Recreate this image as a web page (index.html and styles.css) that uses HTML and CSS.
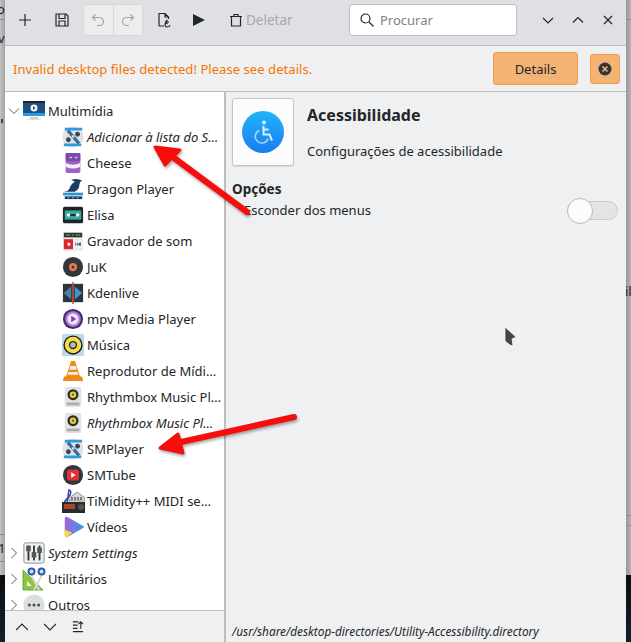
FILE: index.html

```html
<!DOCTYPE html>
<html lang="en">
<head>
  <meta charset="UTF-8" />
  <meta name="viewport" content="width=device-width, initial-scale=1.0" />
  <title>Editor de menus</title>
  <link rel="stylesheet" href="styles.css">
</head>
<body>
  <svg class="defs" width="0" height="0">
    <symbol id="smplayer" viewBox="0 0 24 24">
      <circle cx="12" cy="12" r="11.500" fill="#dfe3e6"/>
      <path d="M3 2h19v3H3zM2 19h19v3H2z" fill="#2f9ae0"/>
      <path d="M5 6l3-2 12 14-3 2z" fill="#3a6f9c"/>
      <circle cx="17" cy="9" r="2.600" fill="#3b4247"/>
      <circle cx="7" cy="15" r="2.600" fill="#3b4247"/>
      <circle cx="12" cy="11.500" r="1.300" fill="#f3f5f6"/>
    </symbol>
    <symbol id="rhythmbox" viewBox="0 0 24 24">
      <rect x="3" y="1" width="18" height="22" rx="2" fill="#e2e2e2"/>
      <rect x="5" y="18" width="14" height="3" fill="#adadad"/>
      <circle cx="12" cy="9.500" r="6" fill="#2b2b2b"/>
      <circle cx="12" cy="9.500" r="3.500" fill="#e5cf3a"/>
      <circle cx="12" cy="9.500" r="1.200" fill="#555"/>
    </symbol>
  </svg>

  <div class="desktop">
    <div class="strip strip-left">
      <div class="back-area back-left">
        <span class="back-text back-o">o</span>
        <div class="back-line line-l1"></div>
        <span class="back-text back-v">v(</span>
        <div class="back-mark"></div>
        <div class="back-line line-l2"></div>
        <span class="back-text back-one">1</span>
        <div class="back-line line-l3"></div>
      </div>
      <div class="back-dark"></div>
    </div>

    <div class="window">
      <div class="toolbar">
        <button class="tool tool-first">
          <svg width="16" height="16" viewBox="0 0 16 16"><path d="M8 2v12M2 8h12" class="ico"/></svg>
        </button>
        <button class="tool">
          <svg width="16" height="16" viewBox="0 0 16 16"><path d="M2 2h10l2 2v10H2zM5 2v4.500h6V2M5 14V9h6v5" class="ico"/></svg>
        </button>
        <div class="tool-group">
          <button class="tool-small">
            <svg width="14" height="14" viewBox="0 0 14 14"><path d="M4.500 1.500L1.500 4.500l3 3M1.500 4.500h7a3.500 3.500 0 0 1 0 8H6" class="ico-off"/></svg>
          </button>
          <button class="tool-small">
            <svg width="14" height="14" viewBox="0 0 14 14"><path d="M9.500 1.500l3 3-3 3M12.500 4.500h-7a3.500 3.500 0 0 0 0 8H8" class="ico-off"/></svg>
          </button>
        </div>
        <button class="tool">
          <svg width="16" height="16" viewBox="0 0 16 16"><path d="M3 14V1.500h6l3.500 3.500v2M9 1.500V5h3.500M8 14H3M14 13a2.500 2.500 0 1 1-2.500-3H13M11.500 8l-2 2 2 2" class="ico"/></svg>
        </button>
        <button class="tool tool-play">
          <svg width="14" height="14" viewBox="0 0 14 14"><path d="M1 1l12 6-12 6z" fill="#232629"/></svg>
        </button>
        <button class="tool-delete">
          <svg width="14" height="14" viewBox="0 0 14 14"><path d="M1 3.500h12M5 3.500V1.500h4v2M2.500 3.500v9.500h9V3.500" class="ico"/></svg>
          <span>Deletar</span>
        </button>
        <div class="search">
          <svg width="14" height="14" viewBox="0 0 14 14"><circle cx="5.500" cy="5.500" r="4.500" class="ico"/><path d="M9 9l4.500 4.500" class="ico"/></svg>
          <span>Procurar</span>
        </div>
        <button class="win-btn">
          <svg width="12" height="12" viewBox="0 0 12 12"><path d="M1 4l5 5 5-5" class="ico"/></svg>
        </button>
        <button class="win-btn">
          <svg width="12" height="12" viewBox="0 0 12 12"><path d="M1 8.500l5-5 5 5" class="ico"/></svg>
        </button>
        <button class="win-btn">
          <svg width="12" height="12" viewBox="0 0 12 12"><path d="M2 2l8 8M10 2l-8 8" class="ico"/></svg>
        </button>
      </div>

      <div class="message">
        <span class="message-text">Invalid desktop files detected! Please see details.</span>
        <button class="details">Details</button>
        <button class="dismiss">
          <svg width="14" height="14" viewBox="0 0 14 14"><circle cx="7" cy="7" r="6.500" fill="#31363b"/><path d="M4.500 4.500l5 5M9.500 4.500l-5 5" stroke="#f3b375" stroke-width="1.600"/></svg>
        </button>
      </div>

      <div class="main">
        <div class="side">
          <ul class="tree">
            <li class="row">
              <svg class="arrow" width="12" height="12" viewBox="0 0 12 12"><path d="M1 3.500l5 5 5-5" class="ico-soft"/></svg>
              <svg class="cat-icon" width="24" height="24" viewBox="0 0 24 24">
                <rect x="1" y="3" width="22" height="14" fill="#1d4f80"/>
                <rect x="1" y="14" width="22" height="3" fill="#2a9be0"/>
                <rect x="1" y="2" width="22" height="2" fill="#222"/>
                <circle cx="12" cy="9" r="3.500" fill="#eef3f7"/>
                <path d="M11 7.300l2.600 1.700-2.600 1.700z" fill="#1d4f80"/>
                <rect x="8" y="18" width="8" height="2" fill="#c7cdd2"/>
                <rect x="5" y="20" width="14" height="1" fill="#dfe3e6"/>
              </svg>
              <span>Multimídia</span>
            </li>
            <li class="row child">
              <svg class="app-icon" width="22" height="22"><use href="#smplayer"/></svg>
              <span class="hidden-item">Adicionar à lista do S…</span>
            </li>
            <li class="row child">
              <svg class="app-icon" width="22" height="22" viewBox="0 0 24 24">
                <rect x="4" y="1" width="16" height="22" rx="2" fill="#9a62c4"/>
                <rect x="4" y="1" width="16" height="9" rx="1" fill="#7d4aa8"/>
                <path d="M4 12q8 4 16 0v4q-8 4-16 0z" fill="#f5eefa"/>
                <path d="M8 6h3M14 6h3" stroke="#d7b8ea" stroke-width="1.500"/>
              </svg>
              <span>Cheese</span>
            </li>
            <li class="row child">
              <svg class="app-icon" width="22" height="22" viewBox="0 0 24 24">
                <path d="M2 15q4 0 6-3 1-5 6-8l-4-2q7-2 12 1-3 1-3 4 0 5-5 8H2z" fill="#1a3d66"/>
                <path d="M1 16h22v3H1z" fill="#2b95d8"/>
                <path d="M3 20h19v3H3z" fill="#1a3d66"/>
                <path d="M6 21.500h2M11 21.500h2M16 21.500h2" stroke="#8cc7ec"/>
              </svg>
              <span>Dragon Player</span>
            </li>
            <li class="row child">
              <svg class="app-icon" width="22" height="22" viewBox="0 0 24 24">
                <rect x="1" y="3" width="22" height="18" rx="2" fill="#202426"/>
                <rect x="3" y="7" width="18" height="10" fill="#3aa89a"/>
                <circle cx="7" cy="12" r="2" fill="#e8f4f2"/>
                <circle cx="17" cy="12" r="2" fill="#e8f4f2"/>
                <path d="M9 12h6" stroke="#202426" stroke-width="2"/>
              </svg>
              <span>Elisa</span>
            </li>
            <li class="row child">
              <svg class="app-icon" width="22" height="22" viewBox="0 0 24 24">
                <rect x="1" y="2" width="22" height="21" fill="#eceeef"/>
                <rect x="2" y="3" width="20" height="5" fill="#2e3336"/>
                <path d="M4 5.500h5M11 5.500h2M15 5.500h5" stroke="#6fd060"/>
                <rect x="2" y="10" width="10" height="11" fill="#e0252f"/>
                <rect x="6" y="14" width="3" height="3" fill="#fff"/>
                <path d="M15 14v3M17 14v3M20 14l-2 1.500 2 1.500z" stroke="#555"/>
              </svg>
              <span>Gravador de som</span>
            </li>
            <li class="row child">
              <svg class="app-icon" width="22" height="22" viewBox="0 0 24 24">
                <circle cx="12" cy="12" r="11" fill="#33363a"/>
                <circle cx="12" cy="12" r="4.500" fill="#e8774a"/>
                <circle cx="12" cy="12" r="1.500" fill="#33363a"/>
              </svg>
              <span>JuK</span>
            </li>
            <li class="row child">
              <svg class="app-icon" width="22" height="22" viewBox="0 0 24 24">
                <rect x="1" y="2" width="22" height="20" fill="#2f3438"/>
                <path d="M10 5v14l-8-7z" fill="#4a7fa6"/>
                <path d="M14 5v14l8-7z" fill="#3f95cf"/>
                <rect x="11.200" y="0" width="1.600" height="24" fill="#c9503f"/>
              </svg>
              <span>Kdenlive</span>
            </li>
            <li class="row child">
              <svg class="app-icon" width="22" height="22" viewBox="0 0 24 24">
                <circle cx="12" cy="12" r="11" fill="#4a2a72"/>
                <circle cx="12" cy="12" r="8.500" fill="#b07fd8"/>
                <circle cx="12" cy="12" r="6" fill="#efe6f7"/>
                <path d="M10 8.500l5.500 3.500-5.500 3.500z" fill="#7b3fb0"/>
              </svg>
              <span>mpv Media Player</span>
            </li>
            <li class="row child">
              <svg class="app-icon" width="22" height="22" viewBox="0 0 24 24">
                <rect x="0" y="0" width="24" height="24" rx="2" fill="#bcd9ec"/>
                <circle cx="12" cy="12" r="10.500" fill="#1d1d1d"/>
                <circle cx="12" cy="12" r="9" fill="#f1dd45"/>
                <circle cx="12" cy="12" r="4.500" fill="#2a2a2a"/>
                <circle cx="12" cy="12" r="3" fill="#b9b9b9"/>
              </svg>
              <span>Música</span>
            </li>
            <li class="row child">
              <svg class="app-icon" width="22" height="22" viewBox="0 0 24 24">
                <path d="M10 1h4l6 18H4z" fill="#f28a14"/>
                <path d="M9 6.500h6l1 4H8zM7 13h10l1 3H6z" fill="#f4f0e8"/>
                <path d="M2 18h20l1 5H1z" fill="#ef8a12"/>
              </svg>
              <span>Reprodutor de Mídi…</span>
            </li>
            <li class="row child">
              <svg class="app-icon" width="22" height="22"><use href="#rhythmbox"/></svg>
              <span>Rhythmbox Music Pl…</span>
            </li>
            <li class="row child">
              <svg class="app-icon" width="22" height="22"><use href="#rhythmbox"/></svg>
              <span class="hidden-item">Rhythmbox Music Pl…</span>
            </li>
            <li class="row child">
              <svg class="app-icon" width="22" height="22"><use href="#smplayer"/></svg>
              <span>SMPlayer</span>
            </li>
            <li class="row child">
              <svg class="app-icon" width="22" height="22" viewBox="0 0 24 24">
                <circle cx="12" cy="12" r="11" fill="#33363a"/>
                <rect x="5.500" y="6" width="13" height="12" rx="2.500" fill="#e2303a"/>
                <path d="M10 9l5 3-5 3z" fill="#fff"/>
              </svg>
              <span>SMTube</span>
            </li>
            <li class="row child timidity">
              <svg class="app-icon" width="24" height="24" viewBox="0 0 24 24">
                <path d="M6 14L8 1q3 1 1 5L4 12q-2 3 1 3" fill="none" stroke="#3b43a8" stroke-width="1.500"/>
                <path d="M8 9l8-6 8 6v3H8z" fill="#d8d8d8" stroke="#555" stroke-width=".6"/>
                <path d="M11 8v3M14 8v3M17 8v3M20 8v3" stroke="#222"/>
                <rect x="1" y="13" width="23" height="11" fill="#2b2b2b"/>
                <rect x="3" y="15" width="11" height="5" fill="#a8472c"/>
                <circle cx="20" cy="18" r="3" fill="#555"/>
              </svg>
              <span>TiMidity++ MIDI se…</span>
            </li>
            <li class="row child">
              <svg class="app-icon" width="22" height="22" viewBox="0 0 24 24">
                <defs>
                  <linearGradient id="vids" x1="0" y1="0" x2="1" y2="0">
                    <stop offset="0" stop-color="#a864d8"/>
                    <stop offset="1" stop-color="#2f9be8"/>
                  </linearGradient>
                </defs>
                <path d="M3 3q0-3 3-2l17 10q2 1 0 2L6 23q-3 1-3-2z" fill="url(#vids)"/>
                <path d="M3 15l8 3-5 5q-3 1-3-2z" fill="#f3d84a"/>
              </svg>
              <span>Vídeos</span>
            </li>
            <li class="row">
              <svg class="arrow" width="12" height="12" viewBox="0 0 12 12"><path d="M3.500 1l5 5-5 5" class="ico-soft"/></svg>
              <svg class="cat-icon" width="24" height="24" viewBox="-1 -1 26 26">
                <rect x="1" y="1" width="22" height="22" rx="2" fill="#eceeef" stroke="#8c8f92"/>
                <rect x="5" y="4" width="2" height="16" fill="#33373a"/>
                <rect x="11" y="4" width="2" height="16" fill="#33373a"/>
                <rect x="17" y="4" width="2" height="16" fill="#33373a"/>
                <rect x="3.500" y="4" width="5" height="6" fill="#55595c"/>
                <rect x="9.500" y="11" width="5" height="6" fill="#55595c"/>
                <rect x="15.500" y="6" width="5" height="6" fill="#55595c"/>
              </svg>
              <span class="hidden-item">System Settings</span>
            </li>
            <li class="row">
              <svg class="arrow" width="12" height="12" viewBox="0 0 12 12"><path d="M3.500 1l5 5-5 5" class="ico-soft"/></svg>
              <svg class="cat-icon" width="24" height="24" viewBox="0 0 24 24">
                <path d="M1 3l20 20H1z" fill="#8cc63f" stroke="#5c9a24" stroke-width=".8"/>
                <path d="M5 14l5 5H5z" fill="#eef6df"/>
                <path d="M9 8l8 15M20 8l-8 15" stroke="#d5d8da" stroke-width="1.800"/>
                <circle cx="9.500" cy="4.500" r="3" fill="#cfe0f2" stroke="#2d5ea8" stroke-width="2"/>
                <circle cx="19.500" cy="4.500" r="3" fill="#cfe0f2" stroke="#2d5ea8" stroke-width="2"/>
              </svg>
              <span>Utilitários</span>
            </li>
            <li class="row">
              <svg class="arrow" width="12" height="12" viewBox="0 0 12 12"><path d="M3.500 1l5 5-5 5" class="ico-soft"/></svg>
              <svg class="cat-icon" width="24" height="24" viewBox="-1 -1 26 26">
                <circle cx="12" cy="12" r="11.500" fill="#dcdfe2"/>
                <circle cx="7" cy="12" r="1.700" fill="#4d5357"/>
                <circle cx="12" cy="12" r="1.700" fill="#4d5357"/>
                <circle cx="17" cy="12" r="1.700" fill="#4d5357"/>
              </svg>
              <span>Outros</span>
            </li>
          </ul>
          <div class="side-actions">
            <button class="side-btn">
              <svg width="12" height="12" viewBox="0 0 12 12"><path d="M0 9l6-6 6 6" class="ico"/></svg>
            </button>
            <button class="side-btn">
              <svg width="12" height="12" viewBox="0 0 12 12"><path d="M0 3l6 6 6-6" class="ico"/></svg>
            </button>
            <button class="side-btn">
              <svg width="13" height="13" viewBox="0 0 13 13"><path d="M1 1.500h6M1 5h5M1 8.500h5M1 12h11M9.500 9V1.500M7 4l2.500-2.500L12 4" class="ico"/></svg>
            </button>
          </div>
        </div>

        <div class="detail">
          <div class="detail-head">
            <button class="icon-btn">
              <svg width="42" height="42" viewBox="0 0 42 42">
                <defs>
                  <linearGradient id="access" x1="0" y1="0" x2="0" y2="1">
                    <stop offset="0" stop-color="#22b4f8"/>
                    <stop offset="1" stop-color="#1a7df0"/>
                  </linearGradient>
                </defs>
                <circle cx="21" cy="21" r="21" fill="url(#access)"/>
                <circle cx="22" cy="11.500" r="2" fill="#dcefff"/>
                <path d="M21.500 15v8.500h6l2.500 6M21.500 18.500h5" fill="none" stroke="#dcefff" stroke-width="2"/>
                <path d="M17.500 19.500a6.500 6.500 0 1 0 8.500 8" fill="none" stroke="#a8d6fb" stroke-width="1.500"/>
              </svg>
            </button>
            <div class="detail-titles">
              <div class="detail-title">Acessibilidade</div>
              <div class="detail-desc">Configurações de acessibilidade</div>
            </div>
          </div>
          <div class="options-title">Opções</div>
          <div class="option-row">
            <span>Esconder dos menus</span>
            <div class="switch"><div class="knob"></div></div>
          </div>
          <div class="status-path">/usr/share/desktop-directories/Utility-Accessibility.directory</div>
        </div>
      </div>
    </div>

    <div class="strip strip-right">
      <div class="back-area back-right">
        <div class="back-line line-r1"></div>
        <span class="back-text back-il">il</span>
        <div class="back-line line-r2"></div>
        <div class="back-line line-r3"></div>
      </div>
      <div class="back-dark"></div>
    </div>
  </div>

  <svg class="overlay" width="631" height="642" viewBox="0 0 631 642">
    <g class="red-arrows">
      <path d="M247 212L166 152" stroke="#f80d0d" stroke-width="6" stroke-linecap="round"/>
      <path d="M155 147L180 150 165 165z" fill="#f80d0d" stroke="#f80d0d" stroke-width="3" stroke-linejoin="round"/>
      <path d="M294 417L172 444" stroke="#f80d0d" stroke-width="6" stroke-linecap="round"/>
      <path d="M160 448L178 434 183 453z" fill="#f80d0d" stroke="#f80d0d" stroke-width="3" stroke-linejoin="round"/>
    </g>
    <path d="M505 327L516 337 512 339 513 346 510 345 505 341z" fill="#444" stroke="#fff" stroke-width=".7"/>
  </svg>
</body>
</html>
```

FILE: styles.css

```css
* {
  box-sizing: border-box;
}
html, body {
  margin: 0;
  height: 642px;
  overflow: hidden;
}
body {
  position: relative;
  font-family: "Noto Sans", sans-serif;
  font-size: 13px;
  color: #232629;
  background: #b5b5b5;
}
button {
  font: inherit;
  color: inherit;
  padding: 0;
  border: none;
  background: none;
  display: flex;
  align-items: center;
  justify-content: center;
}
.defs {
  position: absolute;
}
.ico, .ico-off, .ico-soft {
  fill: none;
  stroke-width: 1.2;
}
.ico {
  stroke: #232629;
}
.ico-off {
  stroke: #a4a6a8;
}
.ico-soft {
  stroke: #5c6164;
  stroke-width: 1;
}

.desktop {
  display: flex;
  width: 631px;
  height: 642px;
}
.strip {
  width: 5px;
  display: flex;
  flex-direction: column;
  overflow: hidden;
}
.back-area {
  height: 575px;
  flex: none;
  font-size: 13px;
  line-height: 16px;
  color: #222;
  display: flex;
  flex-direction: column;
}
.back-left {
  background: linear-gradient(90deg, #c2c2c2, #a2a2a2);
}
.back-right {
  background: linear-gradient(90deg, #979797, #b4b4b4);
}
.back-dark {
  flex: 1;
  background: linear-gradient(#0b0d10, #12202c);
}
.back-text {
  display: block;
  height: 16px;
  flex: none;
  white-space: nowrap;
}
.back-line {
  height: 1px;
  flex: none;
  background: #8e8e8e;
}
.back-mark {
  width: 2px;
  height: 4px;
  flex: none;
  margin: 73px 0 0 1px;
  background: #444;
}
.back-o {
  margin: 1px 0 0 -3px;
}
.line-l1 {
  margin-top: 2px;
}
.back-v {
  margin: 10px 0 0 -2px;
}
.line-l2 {
  margin-top: 411px;
}
.back-one {
  margin: 5px 0 0 -2px;
}
.line-l3 {
  margin-top: 5px;
}
.line-r1 {
  margin-top: 19px;
}
.back-il {
  margin: 263px 0 0 -1px;
}
.line-r2 {
  margin-top: 216px;
}
.line-r3 {
  margin-top: 9px;
}

.window {
  width: 621px;
  height: 642px;
  flex: none;
  display: flex;
  flex-direction: column;
  background: #eff0f1;
}

.toolbar {
  height: 46px;
  flex: none;
  display: flex;
  align-items: flex-start;
  padding: 4px 3px 0 3px;
  background: #dfe0e3;
  border-bottom: 1px solid #bcbebf;
}
.tool {
  width: 34px;
  height: 32px;
  margin-left: 3px;
}
.tool-first {
  margin-left: 0;
}
.tool-play {
  margin-left: 1px;
}
.tool-group {
  display: flex;
  width: 60px;
  height: 32px;
  margin: 0 1px 0 4px;
  border: 1px solid #d6d8da;
  border-radius: 3px;
  background: #eceded;
}
.tool-small {
  flex: 1;
}
.tool-small + .tool-small {
  border-left: 1px solid #d6d8da;
}
.tool-delete {
  width: 80px;
  height: 32px;
  margin-left: 3px;
  gap: 3px;
  color: #a6a8aa;
  font-size: 13.500px;
  justify-content: flex-start;
  padding-left: 10px;
}
.search {
  width: 168px;
  height: 32px;
  margin: 0 16px 0 auto;
  padding-left: 10px;
  display: flex;
  align-items: center;
  gap: 6px;
  background: #fff;
  border: 1px solid #bdbfc1;
  border-radius: 3px;
  color: #7f8385;
}
.win-btn {
  width: 30px;
  height: 32px;
}

.message {
  height: 46px;
  flex: none;
  display: flex;
  align-items: center;
  padding: 0 6px 0 8px;
  border-bottom: 1px solid #bcbebf;
}
.message-text {
  color: #f67400;
  letter-spacing: 0.06px;
}
.details {
  width: 85px;
  height: 33px;
  margin-left: auto;
  background: #f3b375;
  border: 1px solid #f59a45;
  border-radius: 3px;
}
.dismiss {
  width: 30px;
  height: 30px;
  margin-left: 12px;
  background: #f3b375;
  border: 1px solid #f59a45;
  border-radius: 3px;
}

.main {
  flex: 1;
  min-height: 0;
  display: flex;
}
.side {
  width: 221px;
  flex: none;
  display: flex;
  flex-direction: column;
  border-right: 2px solid #bcbebf;
}
.tree {
  list-style: none;
  margin: 0;
  padding: 6px 0 0 1px;
  height: 519px;
  flex: none;
  background: #fff;
  overflow: hidden;
  border-bottom: 1px solid #bcbebf;
}
.row {
  height: 26px;
  display: flex;
  align-items: center;
  padding-left: 2px;
  white-space: nowrap;
}
.arrow {
  flex: none;
}
.cat-icon {
  flex: none;
  margin: 0 2px 0 2px;
}
.child {
  padding-left: 56px;
}
.app-icon {
  flex: none;
  margin-right: 3px;
}
.timidity {
  padding-left: 55px;
}
.timidity .app-icon {
  margin-right: 2px;
}
.hidden-item {
  font-style: italic;
}
.side-actions {
  flex: 1;
  display: flex;
  align-items: center;
  gap: 16px;
  padding: 0 0 0 11px;
}
.side-btn {
  width: 12px;
  height: 12px;
}

.detail {
  flex: 1;
  min-width: 0;
  display: flex;
  flex-direction: column;
  padding: 6px 6px 0 6px;
}
.detail-head {
  display: flex;
  gap: 13px;
}
.icon-btn {
  width: 62px;
  height: 68px;
  background: #fcfcfc;
  border: 1px solid #c3c5c7;
  border-radius: 3px;
  box-shadow: 0 1px 1px rgba(0, 0, 0, 0.1);
}
.detail-title {
  font-size: 16px;
  font-weight: 700;
  line-height: 20px;
  margin-top: 7px;
}
.detail-desc {
  line-height: 18px;
  margin-top: 17px;
}
.options-title {
  font-size: 13.500px;
  font-weight: 700;
  line-height: 20px;
  margin-top: 13px;
}
.option-row {
  display: flex;
  align-items: center;
  justify-content: space-between;
  height: 26px;
  margin-top: -2px;
  padding-left: 12px;
  padding-right: 2px;
}
.switch {
  width: 51px;
  height: 19px;
  background: #e3e4e5;
  border: 1px solid #c9cbcd;
  border-radius: 10px;
  position: relative;
}
.knob {
  position: absolute;
  left: -1px;
  top: -4px;
  width: 26px;
  height: 26px;
  background: #fcfcfc;
  border: 1px solid #b9bbbd;
  border-radius: 50%;
}
.status-path {
  margin-top: auto;
  height: 22px;
  line-height: 22px;
  font-size: 11.800px;
  font-style: italic;
  white-space: nowrap;
}

.overlay {
  position: absolute;
  left: 0;
  top: 0;
  pointer-events: none;
}
.red-arrows {
  filter: drop-shadow(1px 2px 1.5px rgba(0, 0, 0, 0.35));
}
```
